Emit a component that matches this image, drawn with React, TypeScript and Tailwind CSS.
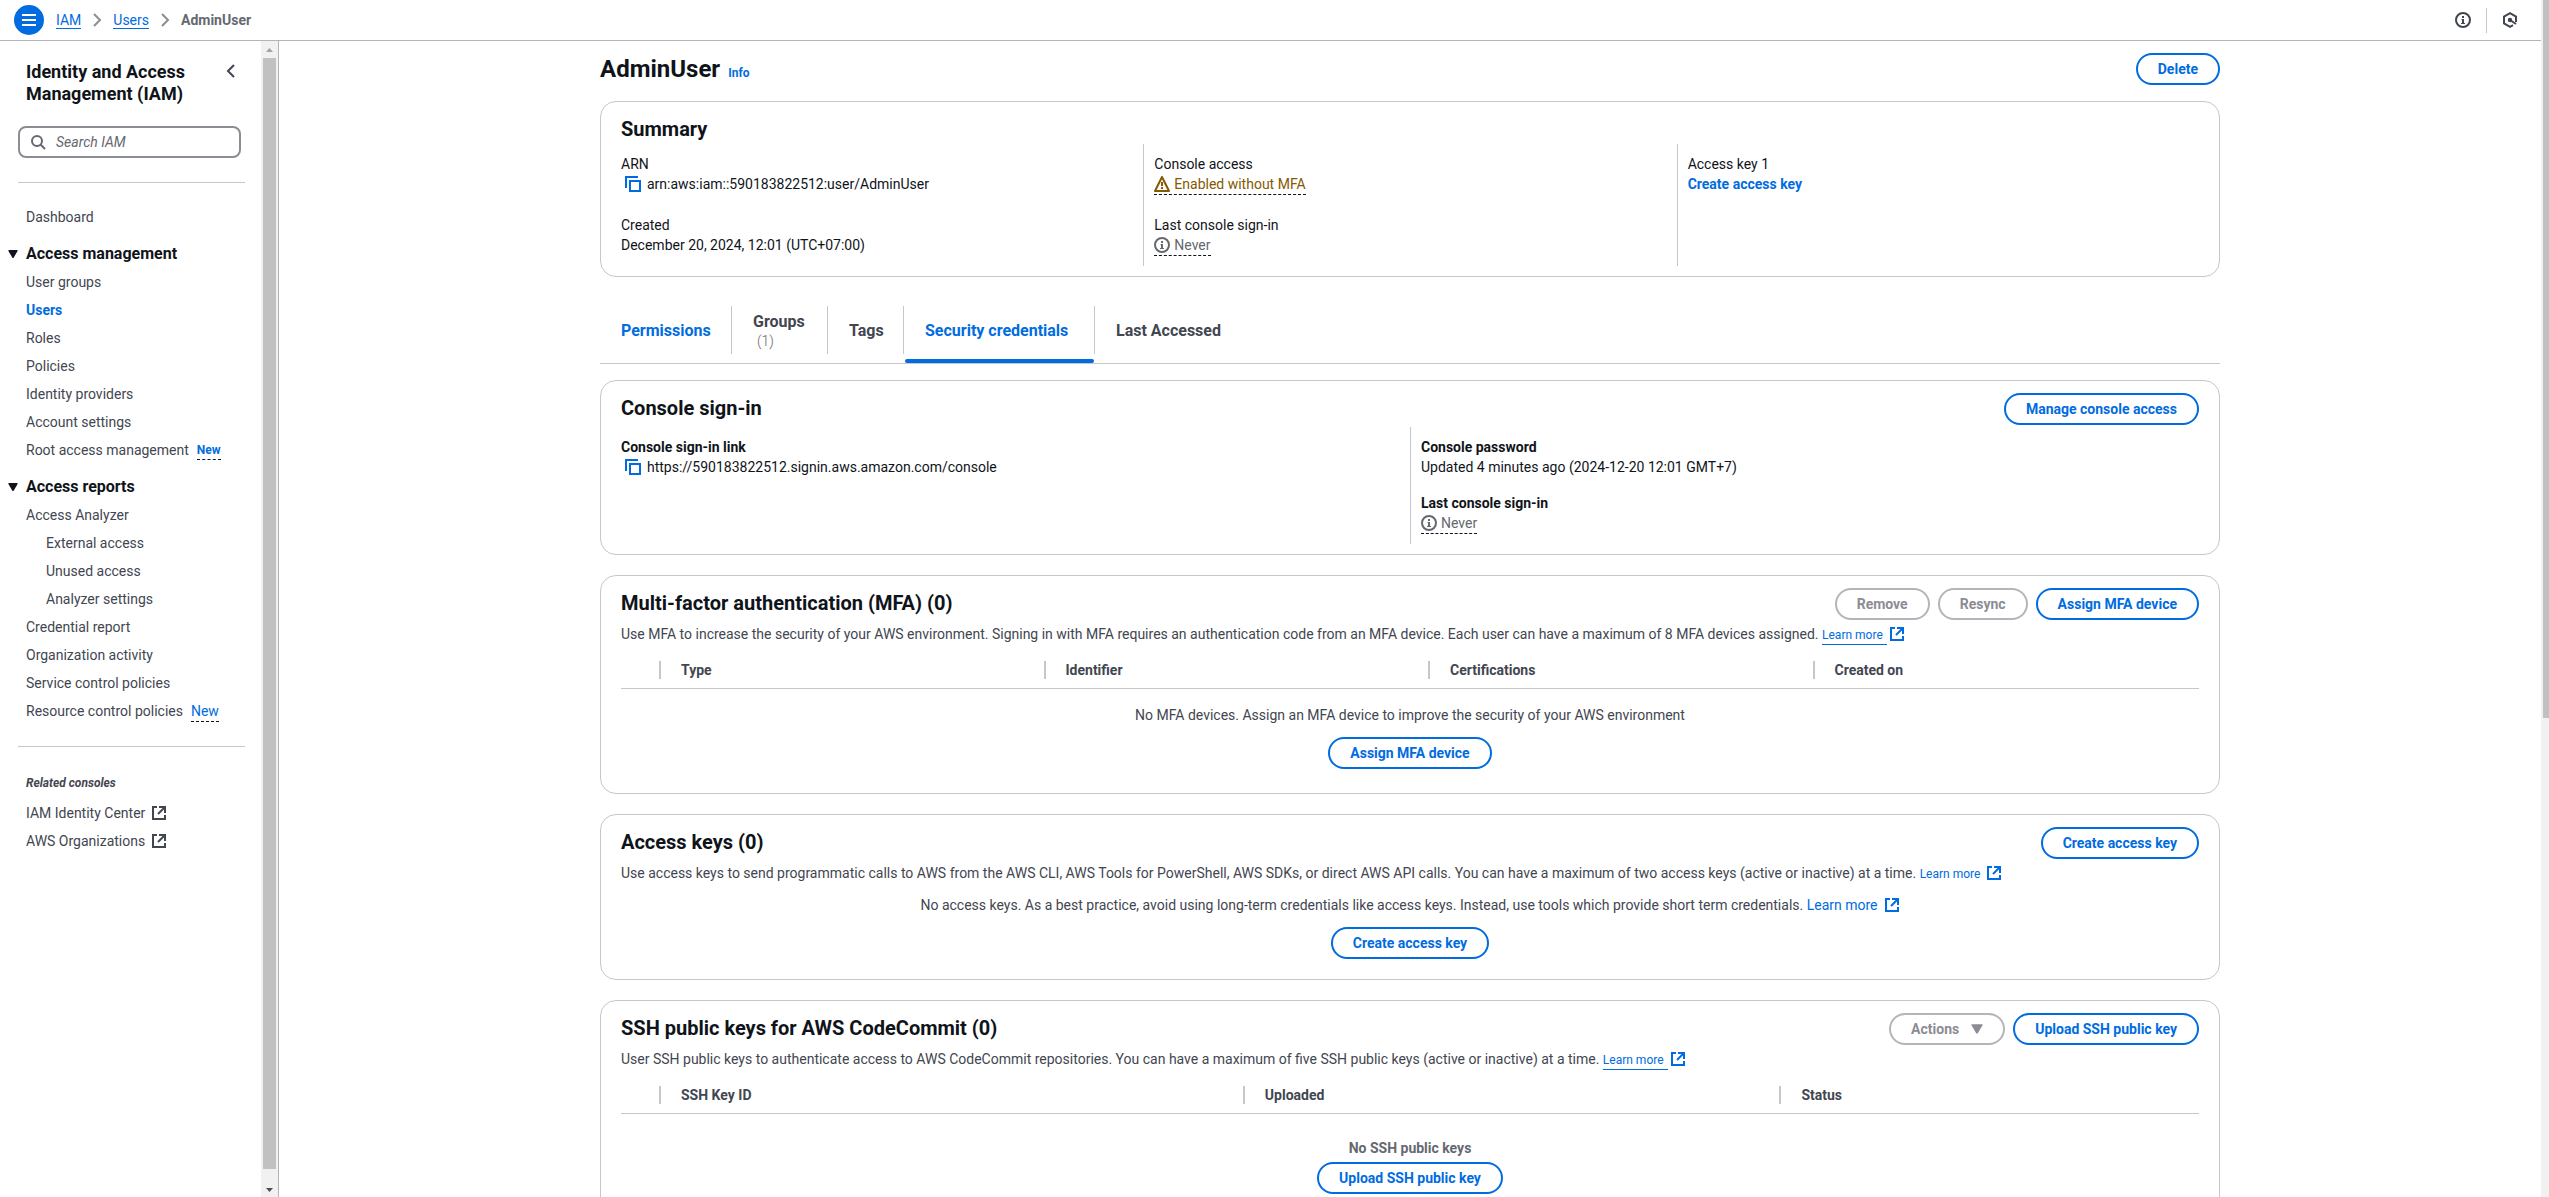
import type { ReactNode } from "react";

const linkColor = "text-[#006ce0]";

function ExternalIcon() {
  return (
    <svg viewBox="0 0 16 16" className="ml-0.5 inline-block size-4 shrink-0 align-[-3px]" fill="none" stroke="currentColor" strokeWidth="2" aria-hidden="true">
      <path d="M8 2h6v6" />
      <path d="m7 9 6.500-6.500" />
      <path d="M14 10v4H2V2h4" />
    </svg>
  );
}

function CopyIcon() {
  return (
    <svg viewBox="0 0 16 16" className="size-4" fill="none" stroke="currentColor" strokeWidth="2" aria-hidden="true">
      <path d="M5 5h10v10H5z" />
      <path d="M1 12V1h12" />
    </svg>
  );
}

function InfoIcon() {
  return (
    <svg viewBox="0 0 16 16" className="size-4 shrink-0" fill="none" stroke="currentColor" aria-hidden="true">
      <circle cx="8" cy="8" r="7" strokeWidth="2" />
      <path d="M8 4v2M8 7v5" strokeWidth="2" />
      <path d="M6.5 7.5H8M6 11.5h4" />
    </svg>
  );
}

function WarningIcon() {
  return (
    <svg viewBox="0 0 16 16" className="size-4 shrink-0" fill="none" stroke="currentColor" strokeWidth="2" strokeLinejoin="round" aria-hidden="true">
      <path d="M8 1 1 15h14L8 1z" />
      <path d="M8 6v4M8 11v2" />
    </svg>
  );
}

function CaretDown({ className }: { className: string }) {
  return (
    <svg viewBox="0 0 10 8" className={className} fill="currentColor" aria-hidden="true">
      <path d="M1 0h8q1 0 .6.9L5.8 7.4q-.8 1.2-1.6 0L.4.9Q0 0 1 0z" />
    </svg>
  );
}

function Chevron() {
  return (
    <svg viewBox="0 0 16 16" className="size-4 text-[#8c8c94]" fill="none" stroke="currentColor" strokeWidth="2" aria-hidden="true">
      <path d="m5 2 6 6-6 6" />
    </svg>
  );
}

function Button({ children, disabled }: { children: ReactNode; disabled?: boolean }) {
  return (
    <button
      type="button"
      disabled={disabled}
      className={
        "flex h-8 items-center gap-3 whitespace-nowrap rounded-full border-2 px-5 text-sm font-bold " +
        (disabled ? "border-[#b4b4bb] text-[#8c8c94]" : "border-[#006ce0] text-[#006ce0]")
      }
    >
      {children}
    </button>
  );
}

function Card({ title, actions, children, className = "" }: { title: string; actions?: ReactNode; children: ReactNode; className?: string }) {
  return (
    <section className={"rounded-2xl border border-[#c6c6cd] px-5 pt-3 " + className}>
      <div className="flex min-h-[30px] items-start justify-between">
        <h2 className="text-xl leading-[30px] font-bold text-[#0f141a]">{title}</h2>
        <div className="flex gap-2">{actions}</div>
      </div>
      {children}
    </section>
  );
}

function Column({ children, first, className = "" }: { children: ReactNode; first?: boolean; className?: string }) {
  return (
    <div className={"flex flex-col items-start border-l px-[10px] py-[10px] " + (first ? "border-transparent " : "border-[#c6c6cd] ") + className}>
      {children}
    </div>
  );
}

function Field({ label, bold, children }: { label: string; bold?: boolean; children: ReactNode }) {
  return (
    <div>
      <div className={bold ? "font-bold" : ""}>{label}</div>
      <div className="flex min-h-5">{children}</div>
    </div>
  );
}

function CopyValue({ text }: { text: string }) {
  return (
    <span className="flex items-center gap-1.5 pl-1">
      <button type="button" aria-label={"Copy " + text} className={linkColor}>
        <CopyIcon />
      </button>
      {text}
    </span>
  );
}

function Status({ icon, text, className }: { icon: ReactNode; text: string; className: string }) {
  return (
    <button type="button" className="flex items-center border-b border-dashed border-[#0f141a]">
      <span className={"flex items-center gap-1 leading-5 " + className}>
        {icon}
        {text}
      </span>
    </button>
  );
}

function LearnMore({ underline, large }: { underline?: boolean; large?: boolean }) {
  return (
    <a href="#learn-more" className={linkColor + (large ? " text-sm" : " text-xs")}>
      <span className={underline ? "border-b border-[#006ce0] pr-1 pb-0.5" : "pr-1"}>Learn more</span>
      <ExternalIcon />
    </a>
  );
}

function HeaderTable({ columns, label }: { columns: { name: string; width: string }[]; label: string }) {
  return (
    <table aria-label={label} className="mt-2 w-full table-fixed border-b border-[#c6c6cd] text-left">
      <thead>
        <tr>
          <th className="w-10 p-0">
            <div className="flex h-9 items-center justify-end">
              <span className="h-[18px] w-0.5 bg-[#c6c6cd]" />
            </div>
          </th>
          {columns.map((c, i) => (
            <th key={c.name} className={"p-0 font-bold text-[#424650] " + c.width}>
              <div className="flex h-9 items-center justify-between pl-5">
                <span>{c.name}</span>
                {i < columns.length - 1 && <span className="h-[18px] w-0.5 bg-[#c6c6cd]" />}
              </div>
            </th>
          ))}
        </tr>
      </thead>
    </table>
  );
}

function NavLink({ children, active, indent }: { children: ReactNode; active?: boolean; indent?: boolean }) {
  return (
    <li className={indent ? "pl-5" : ""}>
      <a href="#nav" className={active ? "font-bold text-[#006ce0]" : ""}>
        {children}
      </a>
    </li>
  );
}

function NavHeading({ children }: { children: ReactNode }) {
  return (
    <button type="button" className="flex items-center gap-2 pl-2 text-base leading-[22px] font-bold text-[#0f141a]">
      <CaretDown className="h-2 w-[10px]" />
      {children}
    </button>
  );
}

function Sidebar() {
  return (
    <div className="flex w-[279px] shrink-0 border-r border-[#b4b4bb]">
      <nav aria-label="Identity and Access Management" className="min-w-0 flex-1 pt-5 text-[#424650]">
        <div className="flex items-start justify-between pr-[22px] pl-[26px]">
          <h2 className="text-lg leading-[22px] font-bold text-[#0f141a]">
            Identity and Access
            <br />
            Management (IAM)
          </h2>
          <button type="button" aria-label="Close navigation" className="mt-0.5">
            <svg viewBox="0 0 16 16" className="size-4" fill="none" stroke="currentColor" strokeWidth="2" aria-hidden="true">
              <path d="m11 2-6 6 6 6" />
            </svg>
          </button>
        </div>
        <label className="mt-[21px] mr-5 ml-[18px] flex h-8 items-center gap-2.5 rounded-lg border-2 border-[#8c8c94] px-[10px] text-[#656871]">
          <svg viewBox="0 0 16 16" className="size-4 shrink-0" fill="none" stroke="currentColor" strokeWidth="2" aria-hidden="true">
            <circle cx="7" cy="7" r="5" />
            <path d="m15 15-4.5-4.5" />
          </svg>
          <input type="search" aria-label="Search IAM" placeholder="Search IAM" className="w-full min-w-0 outline-none placeholder:text-[#656871] placeholder:italic" />
        </label>
        <hr className="mt-6 mr-4 ml-[18px] border-[#c6c6cd]" />
        <ul className="mt-6 pl-[26px]">
          <NavLink>Dashboard</NavLink>
        </ul>
        <div className="mt-4">
          <NavHeading>Access management</NavHeading>
          <ul className="mt-[7px] flex flex-col gap-2 pl-[26px]">
            <NavLink>User groups</NavLink>
            <NavLink active>Users</NavLink>
            <NavLink>Roles</NavLink>
            <NavLink>Policies</NavLink>
            <NavLink>Identity providers</NavLink>
            <NavLink>Account settings</NavLink>
            <li className="flex h-5 items-center gap-2 whitespace-nowrap">
              <a href="#nav">Root access management</a>
              <button type="button" className="border-b border-dashed border-[#0f141a] text-xs leading-[18px] font-bold">
                <span className={linkColor}>New</span>
              </button>
            </li>
          </ul>
        </div>
        <div className="mt-4">
          <NavHeading>Access reports</NavHeading>
          <ul className="mt-[7px] flex flex-col gap-2 pl-[26px]">
            <NavLink>Access Analyzer</NavLink>
            <NavLink indent>External access</NavLink>
            <NavLink indent>Unused access</NavLink>
            <NavLink indent>Analyzer settings</NavLink>
            <NavLink>Credential report</NavLink>
            <NavLink>Organization activity</NavLink>
            <NavLink>Service control policies</NavLink>
            <li className="flex h-5 items-center gap-2 whitespace-nowrap">
              <a href="#nav">Resource control policies</a>
              <button type="button" className="border-b border-dashed border-[#0f141a]">
                <span className={linkColor}>New</span>
              </button>
            </li>
          </ul>
        </div>
        <hr className="mt-[25px] mr-4 ml-[18px] border-[#c6c6cd]" />
        <h3 className="mt-[26px] pl-[26px] text-xs leading-5 font-bold italic">Related consoles</h3>
        <ul className="mt-[10px] flex flex-col gap-2 pl-[26px]">
          <NavLink>
            IAM Identity Center <ExternalIcon />
          </NavLink>
          <NavLink>
            AWS Organizations <ExternalIcon />
          </NavLink>
        </ul>
      </nav>
      <div className="flex w-[17px] shrink-0 flex-col bg-[#f1f1f1]" aria-hidden="true">
        <svg viewBox="0 0 17 17" className="size-[17px] shrink-0 text-[#a3a3a3]" fill="currentColor">
          <path d="M8.500 7 12 11H5z" />
        </svg>
        <div className="mr-0.5 ml-0.5 flex-1 bg-[#c1c1c1]" />
        <svg viewBox="0 0 17 28" className="h-7 w-[17px] shrink-0 text-[#505050]" fill="currentColor">
          <path d="M8.500 23 12 19H5z" />
        </svg>
      </div>
    </div>
  );
}

function TopBar() {
  return (
    <header className="flex h-[41px] shrink-0 items-center justify-between border-b border-[#b4b4bb] pr-[23px] pl-[14px]">
      <div className="flex items-center gap-3">
        <button type="button" aria-label="Open navigation" className="flex size-[30px] items-center justify-center rounded-full bg-[#006ce0] text-white">
          <svg viewBox="0 0 16 16" className="size-4" fill="none" stroke="currentColor" strokeWidth="2" aria-hidden="true">
            <path d="M1 3h14M1 8h14M1 13h14" />
          </svg>
        </button>
        <nav aria-label="Breadcrumbs">
          <ol className="flex items-center gap-2">
            <li>
              <a href="#iam" className={"border-b border-[#006ce0] " + linkColor}>IAM</a>
            </li>
            <li><Chevron /></li>
            <li>
              <a href="#users" className={"border-b border-[#006ce0] " + linkColor}>Users</a>
            </li>
            <li><Chevron /></li>
            <li className="font-bold text-[#656871]">AdminUser</li>
          </ol>
        </nav>
      </div>
      <div className="flex items-center gap-[15px] text-[#424650]">
        <button type="button" aria-label="Info"><InfoIcon /></button>
        <span className="h-[25px] w-px bg-[#c6c6cd]" />
        <button type="button" aria-label="Diagnostics">
          <svg viewBox="0 0 16 16" className="size-4" fill="none" stroke="currentColor" strokeWidth="2" aria-hidden="true">
            <path d="M14 10V4.500L8 1.200 2 4.500v7l6 3.300 3-1.600" />
            <path d="m8 8 6 4" />
            <circle cx="8" cy="8" r="1.200" fill="currentColor" />
          </svg>
        </button>
      </div>
    </header>
  );
}

function Tab({ children, width, selected, last, accent }: { children: ReactNode; width: string; selected?: boolean; last?: boolean; accent?: boolean }) {
  return (
    <div className={"flex flex-col " + width}>
      <div className={"mt-[9px] flex h-12 items-center " + (last ? "" : "border-r border-[#c6c6cd]")}>
        <button
          type="button"
          role="tab"
          aria-selected={!!selected}
          className={"px-[21px] pt-px text-left text-base leading-5 font-bold whitespace-nowrap " + (accent ? linkColor : "text-[#424650]")}
        >
          {children}
        </button>
      </div>
      <span className={"mt-[5px] mr-px ml-px h-1 rounded-xs " + (selected ? "bg-[#006ce0]" : "")} />
    </div>
  );
}

export default function App() {
  return (
    <div className="flex h-screen overflow-hidden bg-white font-[Roboto,sans-serif] text-sm leading-5 text-[#0f141a]">
      <div className="flex min-w-0 flex-1 flex-col">
        <TopBar />
        <div className="flex min-h-0 flex-1">
          <Sidebar />
          <main className="min-w-0 flex-1 overflow-hidden px-10 pt-3">
            <div className="mx-auto max-w-[1620px]">
              <div className="flex items-center justify-between">
                <div className="flex items-baseline gap-2">
                  <h1 className="text-2xl leading-8 font-bold">AdminUser</h1>
                  <a href="#info" className={"text-xs font-bold " + linkColor}>Info</a>
                </div>
                <Button>Delete</Button>
              </div>

              <Card title="Summary" className="mt-4 pb-[10px]">
                <div className="-mx-[11px] grid grid-cols-3">
                  <Column first className="gap-[21px]">
                    <Field label="ARN">
                      <CopyValue text="arn:aws:iam::590183822512:user/AdminUser" />
                    </Field>
                    <Field label="Created">December 20, 2024, 12:01 (UTC+07:00)</Field>
                  </Column>
                  <Column className="gap-5">
                    <Field label="Console access">
                      <Status icon={<WarningIcon />} text="Enabled without MFA" className="text-[#855900]" />
                    </Field>
                    <Field label="Last console sign-in">
                      <Status icon={<InfoIcon />} text="Never" className="text-[#656871]" />
                    </Field>
                  </Column>
                  <Column>
                    <Field label="Access key 1">
                      <a href="#create" className={"font-bold " + linkColor}>Create access key</a>
                    </Field>
                  </Column>
                </div>
              </Card>

              <div role="tablist" className="mt-5 flex border-b border-[#c6c6cd]">
                <Tab width="w-[132px]" accent>Permissions</Tab>
                <Tab width="w-24">
                  Groups
                  <span className="block pl-1 text-sm leading-[18px] font-light text-[#656871]">(1)</span>
                </Tab>
                <Tab width="w-[76px]">Tags</Tab>
                <Tab width="w-[191px]" accent selected>Security credentials</Tab>
                <Tab width="w-[145px]" last>Last Accessed</Tab>
              </div>

              <div className="mt-4 flex flex-col gap-5">
                <Card title="Console sign-in" actions={<Button>Manage console access</Button>} className="pb-[10px]">
                  <div className="-mx-[11px] mt-0.5 grid grid-cols-2">
                    <Column first>
                      <Field label="Console sign-in link" bold>
                        <CopyValue text="https://590183822512.signin.aws.amazon.com/console" />
                      </Field>
                    </Column>
                    <Column className="gap-4">
                      <Field label="Console password" bold>Updated 4 minutes ago (2024-12-20 12:01 GMT+7)</Field>
                      <Field label="Last console sign-in" bold>
                        <Status icon={<InfoIcon />} text="Never" className="text-[#656871]" />
                      </Field>
                    </Column>
                  </div>
                </Card>

                <Card
                  title="Multi-factor authentication (MFA) (0)"
                  className="pb-6"
                  actions={
                    <>
                      <Button disabled>Remove</Button>
                      <Button disabled>Resync</Button>
                      <Button>Assign MFA device</Button>
                    </>
                  }
                >
                  <p className="mt-1 text-[#424650]">
                    Use MFA to increase the security of your AWS environment. Signing in with MFA requires an authentication code from an MFA device. Each user can have a maximum of 8 MFA devices assigned.{" "}
                    <LearnMore underline />
                  </p>
                  <HeaderTable
                    label="MFA devices"
                    columns={[
                      { name: "Type", width: "" },
                      { name: "Identifier", width: "" },
                      { name: "Certifications", width: "" },
                      { name: "Created on", width: "" },
                    ]}
                  />
                  <div className="mt-4 flex flex-col items-center gap-3 text-[#424650]">
                    <p>No MFA devices. Assign an MFA device to improve the security of your AWS environment</p>
                    <Button>Assign MFA device</Button>
                  </div>
                </Card>

                <Card title="Access keys (0)" className="pb-5" actions={<Button>Create access key</Button>}>
                  <p className="mt-1 text-[#424650]">
                    Use access keys to send programmatic calls to AWS from the AWS CLI, AWS Tools for PowerShell, AWS SDKs, or direct AWS API calls. You can have a maximum of two access keys (active or inactive) at a time.{" "}
                    <LearnMore />
                  </p>
                  <div className="mt-3 flex flex-col items-center gap-3 text-[#424650]">
                    <p>
                      No access keys. As a best practice, avoid using long-term credentials like access keys. Instead, use tools which provide short term credentials.{" "}
                      <LearnMore large />
                    </p>
                    <Button>Create access key</Button>
                  </div>
                </Card>

                <Card
                  title="SSH public keys for AWS CodeCommit (0)"
                  className="pb-5"
                  actions={
                    <>
                      <Button disabled>
                        Actions
                        <CaretDown className="h-2.5 w-3" />
                      </Button>
                      <Button>Upload SSH public key</Button>
                    </>
                  }
                >
                  <p className="mt-1 text-[#424650]">
                    User SSH public keys to authenticate access to AWS CodeCommit repositories. You can have a maximum of five SSH public keys (active or inactive) at a time.{" "}
                    <LearnMore underline />
                  </p>
                  <HeaderTable
                    label="SSH public keys"
                    columns={[
                      { name: "SSH Key ID", width: "w-[37%]" },
                      { name: "Uploaded", width: "w-[34%]" },
                      { name: "Status", width: "" },
                    ]}
                  />
                  <div className="mt-6 flex flex-col items-center gap-1">
                    <p className="font-bold text-[#656871]">No SSH public keys</p>
                    <Button>Upload SSH public key</Button>
                  </div>
                </Card>
              </div>
            </div>
          </main>
        </div>
      </div>
      <div className="w-2 shrink-0 bg-[#f1f1f1] pl-0.5" aria-hidden="true">
        <div className="h-3/5 bg-[#c1c1c1]" />
      </div>
    </div>
  );
}
